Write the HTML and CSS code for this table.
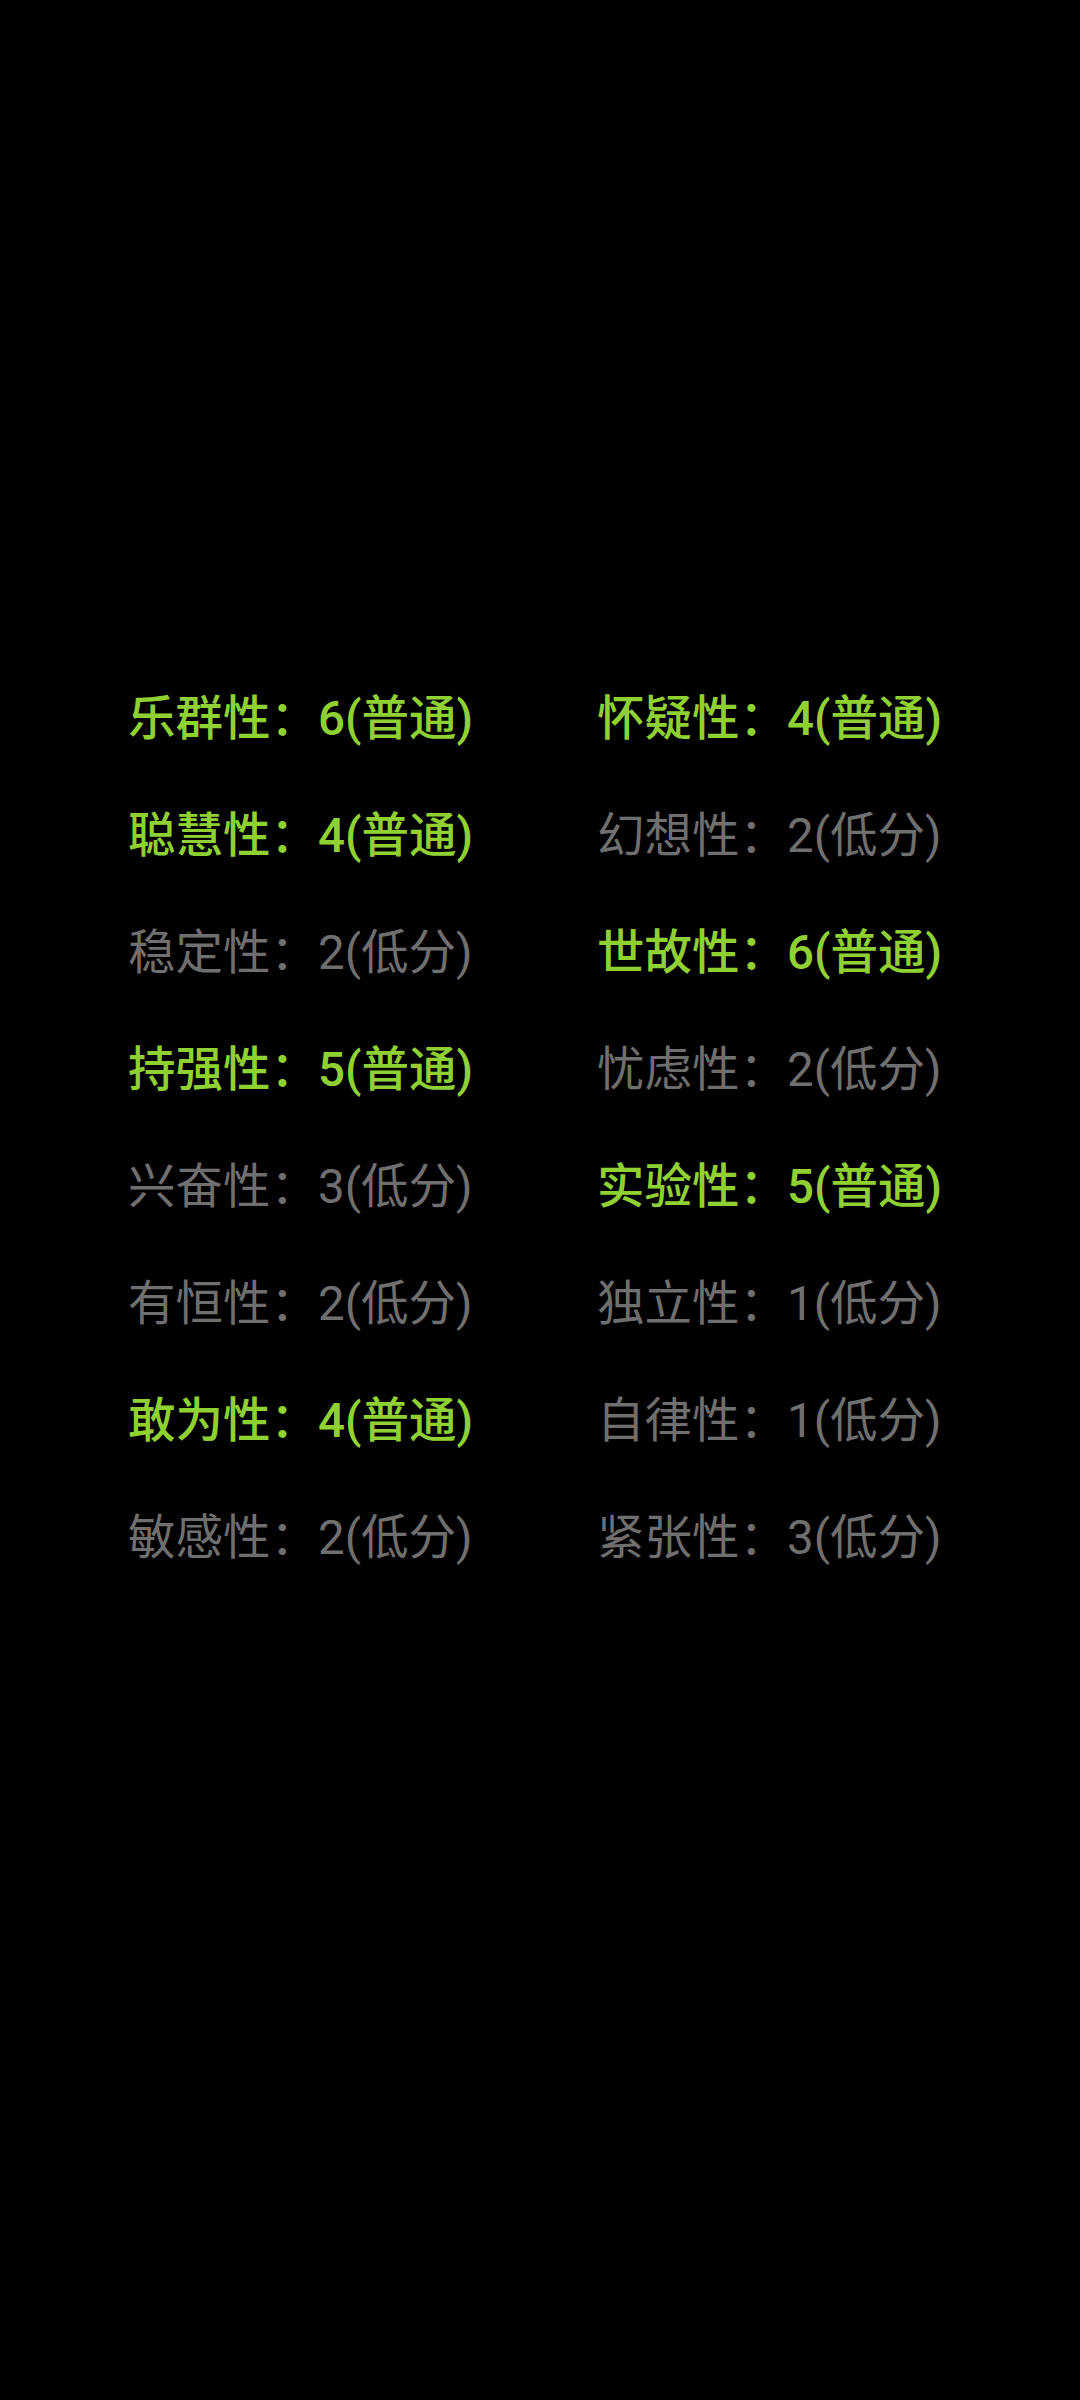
FILE: index.html
```html
<!DOCTYPE html>
<html lang="zh-CN">
<head>
<meta charset="utf-8">
<link rel="stylesheet" href="styles.css">
</head>
<body>
<div class="grid">
  <div class="item hi">乐群性：6(普通)</div>
  <div class="item hi">怀疑性：4(普通)</div>
  <div class="item hi">聪慧性：4(普通)</div>
  <div class="item lo">幻想性：2(低分)</div>
  <div class="item lo">稳定性：2(低分)</div>
  <div class="item hi">世故性：6(普通)</div>
  <div class="item hi">持强性：5(普通)</div>
  <div class="item lo">忧虑性：2(低分)</div>
  <div class="item lo">兴奋性：3(低分)</div>
  <div class="item hi">实验性：5(普通)</div>
  <div class="item lo">有恒性：2(低分)</div>
  <div class="item lo">独立性：1(低分)</div>
  <div class="item hi">敢为性：4(普通)</div>
  <div class="item lo">自律性：1(低分)</div>
  <div class="item lo">敏感性：2(低分)</div>
  <div class="item lo">紧张性：3(低分)</div>
</div>
</body>
</html>
```
FILE: styles.css
```css
html, body {
  margin: 0;
  padding: 0;
  background: #000;
  width: 1080px;
  height: 2400px;
  overflow: hidden;
}
.grid {
  display: grid;
  grid-template-columns: 469px auto;
  padding-left: 128px;
  padding-top: 661px;
  font-family: Roboto, "Noto Sans CJK SC", sans-serif;
  font-size: 47.5px;
}
.item {
  height: 117px;
  line-height: 117px;
  white-space: nowrap;
}
.hi {
  color: #8fd033;
  font-weight: 500;
}
.lo {
  color: #6f6f6f;
  font-weight: 400;
}
```
